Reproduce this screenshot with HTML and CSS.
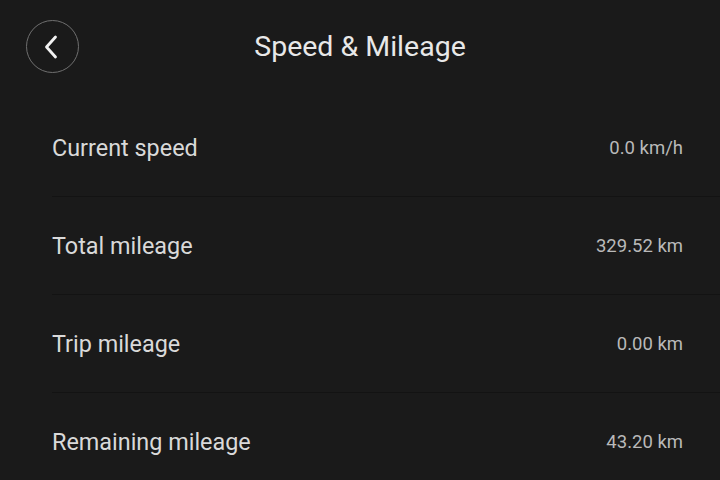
FILE: index.html
```html
<!DOCTYPE html>
<html>
<head>
<meta charset="utf-8">
<link rel="stylesheet" href="styles.css">
</head>
<body>
<div class="page">
  <header class="header">
    <button class="back" aria-label="Back">
      <svg width="24" height="26" viewBox="0 0 24 26"><path d="M15.5 3 L6.5 13 L15.5 23" fill="none" stroke="#f2f2f2" stroke-width="2.8" stroke-linecap="round" stroke-linejoin="round"/></svg>
    </button>
    <h1 class="title">Speed &amp; Mileage</h1>
  </header>
  <ul class="list">
    <li class="row"><span class="label">Current speed</span><span class="value">0.0 km/h</span></li>
    <li class="row"><span class="label">Total mileage</span><span class="value">329.52 km</span></li>
    <li class="row"><span class="label">Trip mileage</span><span class="value">0.00 km</span></li>
    <li class="row"><span class="label">Remaining mileage</span><span class="value">43.20 km</span></li>
  </ul>
</div>
</body>
</html>
```
FILE: styles.css
```css
html, body {
  margin: 0;
  padding: 0;
  background: #1a1a1a;
  width: 720px;
  height: 480px;
  overflow: hidden;
  font-family: Roboto, "Noto Sans", "Liberation Sans", sans-serif;
}
.page {
  width: 720px;
  height: 480px;
}
.header {
  position: relative;
  height: 99px;
  display: flex;
  align-items: flex-start;
  justify-content: center;
}
.back {
  position: absolute;
  left: 26px;
  top: 20px;
  width: 53px;
  height: 53px;
  box-sizing: border-box;
  border: 1.5px solid #6f6f6f;
  border-radius: 50%;
  background: transparent;
  display: flex;
  align-items: center;
  justify-content: center;
  padding: 0;
  padding-right: 2px;
}
.title {
  margin: 0;
  margin-top: 29px;
  font-size: 28.5px;
  font-weight: 400;
  color: #e8e8e8;
  line-height: 36px;
}
.list {
  list-style: none;
  margin: 0 0 0 52px;
  padding: 0;
}
.row {
  height: 97px;
  display: flex;
  align-items: center;
  justify-content: space-between;
  border-bottom: 1px solid #131313;
  padding-right: 37px;
}
.label {
  font-size: 23.4px;
  color: #d9d9d9;
}
.value {
  font-size: 18.5px;
  color: #b9b9b9;
}
```
